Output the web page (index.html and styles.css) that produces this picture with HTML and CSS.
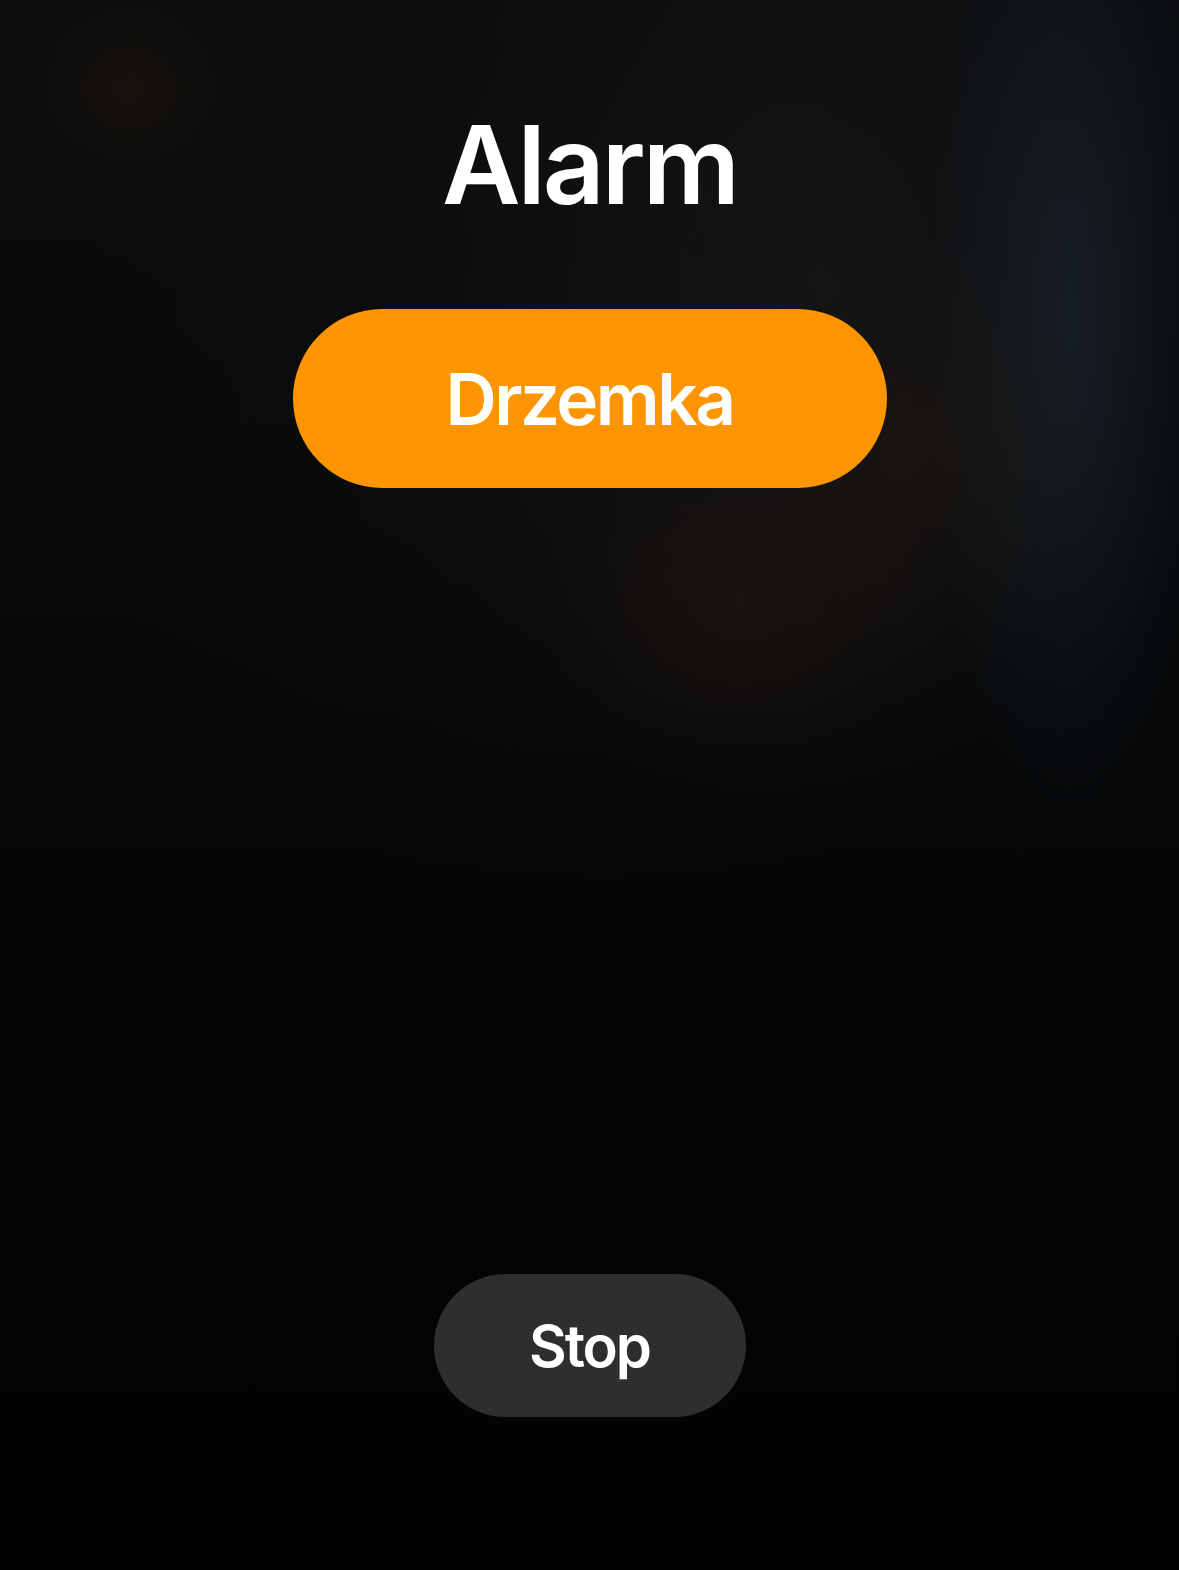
FILE: index.html
```html
<!DOCTYPE html>
<html lang="pl">
<head>
<meta charset="utf-8">
<title>Alarm</title>
<link rel="stylesheet" href="styles.css">
</head>
<body>
<main class="screen">
  <h1 class="title">Alarm</h1>
  <button class="btn btn-snooze">Drzemka</button>
  <div class="spacer"></div>
  <button class="btn btn-stop">Stop</button>
</main>
</body>
</html>
```
FILE: styles.css
```css
html, body {
  margin: 0;
  padding: 0;
  background: #030303;
}
.screen {
  width: 1179px;
  height: 1570px;
  display: flex;
  flex-direction: column;
  align-items: center;
  font-family: Inter, "Noto Sans", sans-serif;
  color: #fff;
  background:
    radial-gradient(ellipse 110px 100px at 130px 90px, rgba(55,32,8,0.3), rgba(0,0,0,0) 100%),
    radial-gradient(ellipse 200px 170px at 740px 600px, rgba(45,25,10,0.4), rgba(0,0,0,0) 100%),
    radial-gradient(ellipse 170px 220px at 920px 460px, rgba(40,26,14,0.35), rgba(0,0,0,0) 100%),
    radial-gradient(ellipse 140px 520px at 1070px 320px, rgba(30,42,52,0.55), rgba(0,0,0,0) 100%),
    radial-gradient(ellipse 420px 560px at 820px 280px, rgba(24,24,25,0.7), rgba(0,0,0,0) 100%),
    radial-gradient(ellipse 520px 520px at 600px 380px, rgba(12,13,15,0.8), rgba(0,0,0,0) 100%),
    linear-gradient(180deg, #0a0c0e 0%, #07090b 35%, #040506 60%, #030303 100%);
  overflow: hidden;
}
.title {
  margin: 100px 0 0;
  font-size: 108px;
  font-weight: 600;
  line-height: 130px;
  letter-spacing: -3px;
}
.btn {
  font-family: Inter, "Noto Sans", sans-serif;
  border: none;
  color: #fff;
  display: flex;
  align-items: center;
  justify-content: center;
  padding: 0;
}
.btn-snooze {
  margin-top: 79px;
  width: 594px;
  height: 179px;
  border-radius: 90px;
  background: #fd9503;
  font-size: 71px;
  font-weight: 600;
  letter-spacing: -2.5px;
}
.spacer {
  flex: 1;
}
.btn-stop {
  width: 312px;
  height: 143px;
  border-radius: 72px;
  background: #2e2e2e;
  font-size: 58px;
  font-weight: 600;
  letter-spacing: -2px;
  margin-bottom: 153px;
}
```
